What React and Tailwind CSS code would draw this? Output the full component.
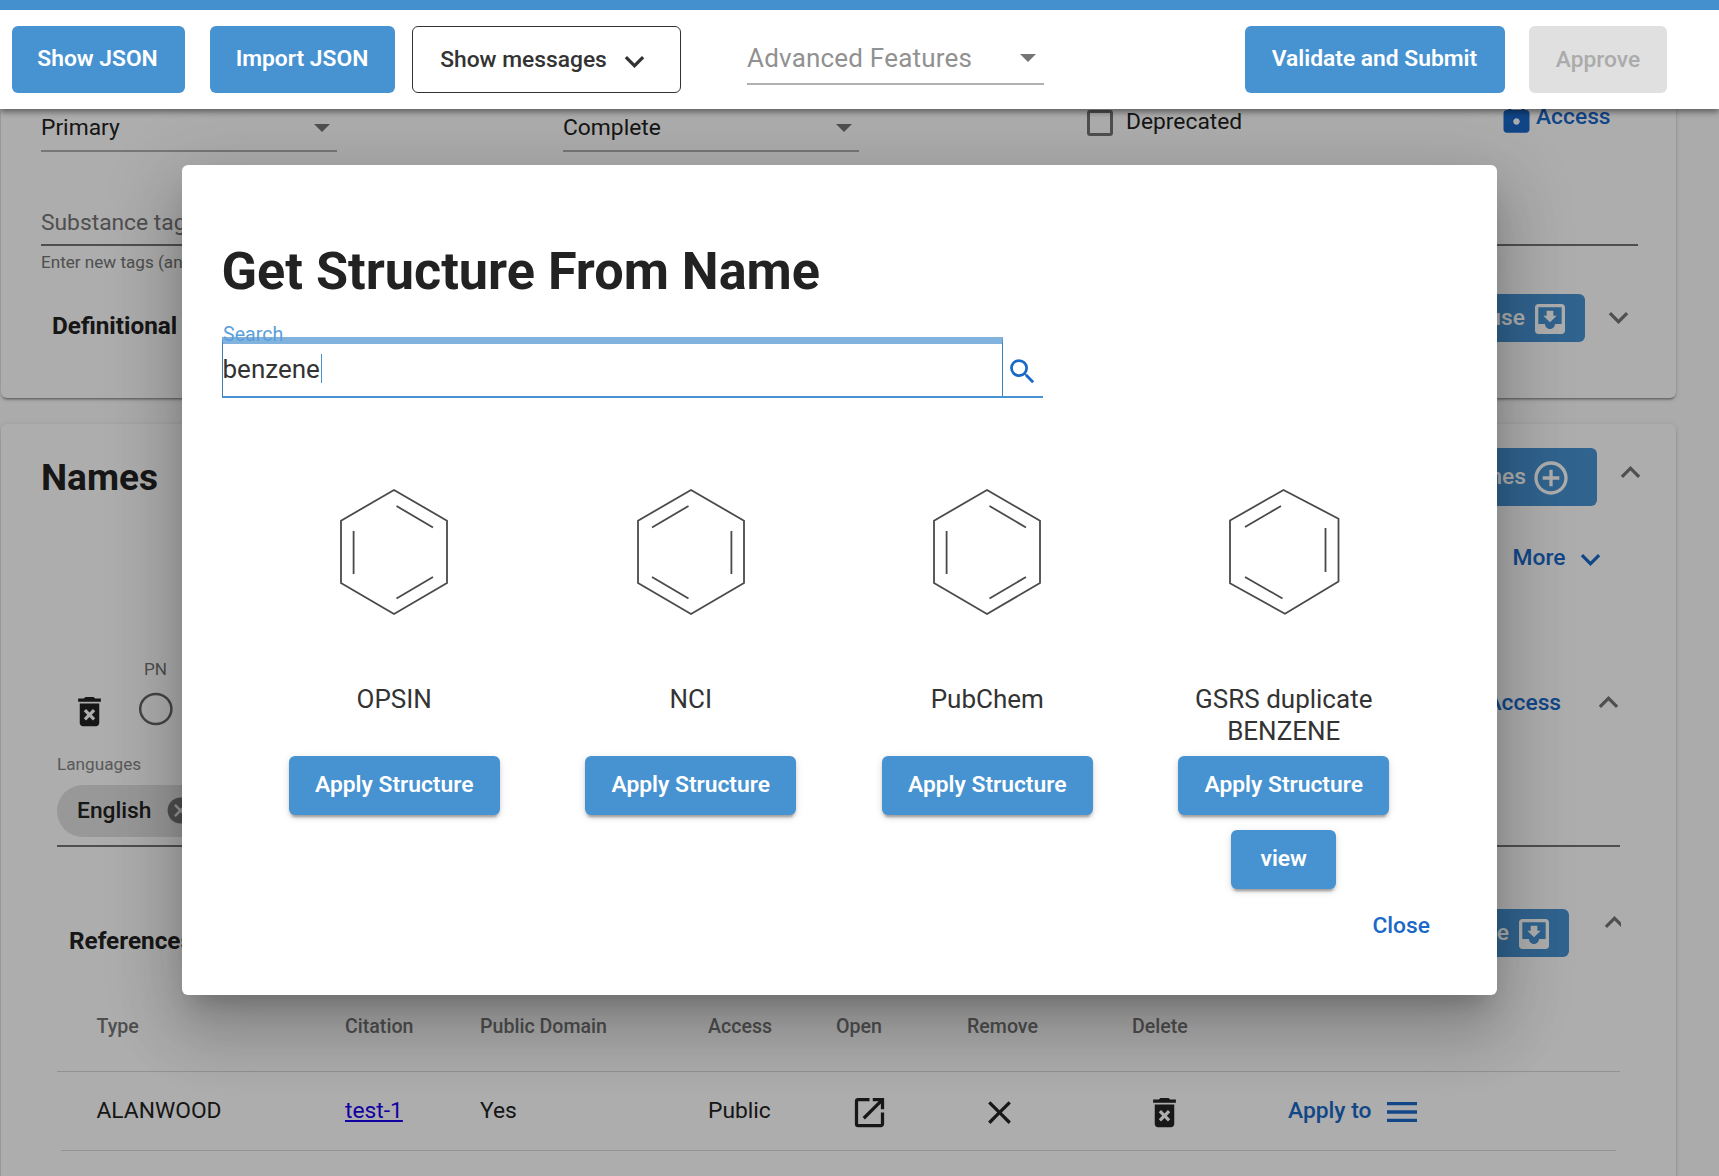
import React from "react";
import {
  MdAddCircleOutline,
  MdCancel,
  MdClose,
  MdDeleteForever,
  MdExpandLess,
  MdExpandMore,
  MdLock,
  MdMenu,
  MdMoveToInbox,
  MdOpenInNew,
  MdSearch,
} from "react-icons/md";

const BLUE_BUTTON =
  "flex items-center justify-center rounded-[6px] bg-[#4793d1] text-white";
const RAISED =
  "shadow-[0_5px_2px_-3px_rgba(0,0,0,0.2),0_3px_3px_0_rgba(0,0,0,0.14),0_2px_8px_0_rgba(0,0,0,0.12)]";

function DropArrow({ className }) {
  return (
    <svg viewBox="0 0 16 8" className={className}>
      <path d="M0 0h16l-8 8z" fill="currentColor" />
    </svg>
  );
}

function Toolbar() {
  return (
    <header className="relative z-20 flex h-[109px] items-start border-t-[10px] border-[#4490cf] bg-white pl-3 pt-4 shadow-[0_3px_6px_rgba(0,0,0,0.45)]">
      <button className={`${BLUE_BUTTON} h-[67px] w-[173px] pr-[2px] font-semibold`}>Show JSON</button>
      <button className={`${BLUE_BUTTON} ml-[25px] h-[67px] w-[185px] pr-px font-semibold`}>Import JSON</button>
      <button className="ml-[17px] flex h-[67px] w-[269px] items-center rounded-[6px] border-[1.5px] border-[#333] pl-[26px] font-medium text-[#333]">
        <span className="w-[169px] whitespace-nowrap pt-px">Show messages</span>
        <MdExpandMore className="ml-[7px] mt-[3px] size-[39px]" />
      </button>
      <div className="ml-[66px] flex h-[59px] w-[297px] items-center justify-between border-b-2 border-[#b0b0b0] pr-[8px] text-[26px] text-[#919191]">
        <span className="mt-[8px] tracking-[0.2px]">Advanced Features</span>
        <DropArrow className="mt-[7px] h-2 w-4 text-[#757575]" />
      </div>
      <button className={`${BLUE_BUTTON} ml-[201px] h-[67px] w-[260px] pr-px font-semibold`}>Validate and Submit</button>
      <button className="ml-6 h-[67px] w-[138px] rounded-[6px] bg-[#e0e0e0] pt-px font-medium text-[#ababab]">
        Approve
      </button>
    </header>
  );
}

function Select({ value, className }) {
  return (
    <div className={`flex h-[43px] w-[296px] items-start justify-between border-b-2 border-[#b0b0b0] pr-[7px] leading-[37px] text-[#222] ${className}`}>
      {value}
      <DropArrow className="mt-[15px] h-2 w-4 text-[#757575]" />
    </div>
  );
}

const CARD =
  "ml-[1px] w-[1675px] bg-white shadow-[0_3px_2px_-2px_rgba(0,0,0,0.25),0_2px_2px_rgba(0,0,0,0.15),0_1px_5px_rgba(0,0,0,0.15)]";

function DefinitionCard() {
  return (
    <section className={`${CARD} h-[289px] rounded-b-[6px] pl-[40px]`}>
      <div className="flex h-[43px] items-start">
        <Select value="Primary" />
        <Select value="Complete" className="ml-[226px]" />
        <span className="ml-[228px] mt-[1px] size-[26px] rounded-[3px] border-[3px] border-[#757575]" />
        <span className="ml-[13px] w-[120px] leading-[26px] text-[#222]">Deprecated</span>
        <span className="ml-[251px] -mt-3 flex items-start font-medium text-[#1a68c8]">
          <MdLock className="size-[39px]" />
          <span className="leading-[39px]">Access</span>
        </span>
      </div>
      <div className="flex h-[94px] w-[1597px] items-end border-b-2 border-[#757575] pb-[2px] leading-[38px] text-[#757575]">
        Substance tags
      </div>
      <div className="h-[40px] pt-[2px] text-[17.1px] leading-[29px] text-[#757575]">
        Enter new tags (and
      </div>
      <div className="flex items-start pl-[11px]">
        <h3 className="mt-[22px] w-[1301px] text-[24.3px] font-bold leading-[36px] text-[#222]">Definitional</h3>
        <button className={`${BLUE_BUTTON} mt-[8px] h-[48px] w-[232px] justify-end! pr-[15px] font-medium`}>
          <span>Reuse</span>
          <MdMoveToInbox className="ml-[5px] mt-[2px] size-[40px]" />
        </button>
        <MdExpandMore className="ml-[14px] mt-[12px] size-[39px] text-[#757575]" />
      </div>
    </section>
  );
}

function NamesCard() {
  return (
    <section className={`${CARD} mt-[26px] flex h-[800px] flex-col rounded-t-[6px] pl-[40px]`}>
      <div className="flex h-[105px] items-start">
        <h2 className="mt-[31px] w-[1300px] text-[37px] font-bold leading-[46px] text-[#222]">Names</h2>
        <button className={`${BLUE_BUTTON} mt-[24px] h-[58px] w-[256px] justify-end! pr-[26px] font-medium`}>
          <span>Names</span>
          <MdAddCircleOutline className="ml-[5px] mt-px size-[40px]" />
        </button>
        <MdExpandLess className="ml-[13.5px] mt-[28.5px] size-[39px] text-[#757575]" />
      </div>
      <div className="flex h-[59px] items-center justify-end pr-[66px] font-medium text-[#1a68c8]">
        More
        <MdExpandMore className="ml-[5.5px] mt-[2px] size-[39px]" />
      </div>
      <div className="flex h-[164px] items-start">
        <MdDeleteForever className="ml-[29px] mt-[103.5px] size-[39px] text-[#222]" />
        <div className="ml-[21.5px] mt-[69px] flex w-[50px] flex-col items-center text-[17.1px] leading-[24px] text-[#757575]">
          PN
          <svg viewBox="0 0 34 34" className="mt-[11px] size-[34px]">
            <ellipse cx="16.8" cy="17" rx="15.6" ry="15" fill="none" stroke="#666" strokeWidth="2.5" />
          </svg>
        </div>
        <span className="ml-[1306px] mt-[97px] font-medium leading-[36px] text-[#1a68c8]">Access</span>
        <MdExpandLess className="ml-[28px] mt-[95px] size-[39px] text-[#757575]" />
      </div>
      <div className="ml-[16px] flex h-[95px] w-[1563px] flex-col border-b-2 border-[#757575]">
        <span className="text-[17.2px] leading-[25px] text-[#858585]">Languages</span>
        <div className="mt-[8px] flex h-[52px] w-[160px] items-center rounded-full bg-[#e0e0e0] pl-[20px] font-medium text-[#222]">
          <span className="w-[74px]">English</span>
          <MdCancel className="ml-[13.5px] -mt-px size-[31px] text-[#757575]" />
        </div>
      </div>
      <div className="ml-[28px] flex h-[123px] items-start">
        <h3 className="mt-[76px] w-[1280px] text-[24.3px] font-bold leading-[36px] text-[#222]">References</h3>
        <button className={`${BLUE_BUTTON} mt-[62px] h-[48px] w-[220px] justify-end! pr-[15px] font-medium`}>
          <span>Reuse</span>
          <MdMoveToInbox className="ml-[5px] mt-[2px] size-[40px]" />
        </button>
        <div className="ml-[25.5px] mt-[56px] h-[39px] w-[26px] overflow-hidden">
          <MdExpandLess className="size-[39px] text-[#757575]" />
        </div>
      </div>
      <ReferenceTable />
    </section>
  );
}

const COLUMNS =
  "grid grid-cols-[248.5px_135px_228px_128px_131px_165px_156px_1fr] items-center pl-[39.5px]";

function ReferenceTable() {
  return (
    <div className="ml-[16px] w-[1563px]">
      <div className={`${COLUMNS} h-[102px] border-b-[1.5px] border-[#d8d8d8] pt-[12px] text-[19.6px] font-medium text-[#757575]`}>
        <span>Type</span>
        <span>Citation</span>
        <span>Public Domain</span>
        <span>Access</span>
        <span>Open</span>
        <span>Remove</span>
        <span>Delete</span>
      </div>
      <div className={`${COLUMNS} mx-[4px] h-[79px] border-b-[1.5px] border-[#d8d8d8] pl-[35.5px]! pt-px text-[#222]`}>
        <span>ALANWOOD</span>
        <span className="text-[#1a00ee] underline">test-1</span>
        <span>Yes</span>
        <span>Public</span>
        <MdOpenInNew className="ml-[14px] mt-[2px] size-[39px]" />
        <MdClose className="ml-[13px] mt-[2px] size-[39px]" />
        <MdDeleteForever className="ml-[13px] mt-[2px] size-[39px]" />
        <span className="flex items-center font-medium text-[#1a68c8]">
          Apply to
          <MdMenu className="ml-[11px] size-[40px]" />
        </span>
      </div>
    </div>
  );
}

const RING_LEFT = {
  outline: "60,10 113,40.7 113,103 60,134 7,103 7,40.7",
  bonds: "M19.6 51v43M62.5 26l36.5 21.5M62.5 118.5l36.5-21.5",
};
const RING_RIGHT = {
  outline: "60,10 113,40.7 113,103 60,134 7,103 7,40.7",
  bonds: "M100.4 51v43M57.5 26l-36.5 21.5M57.5 118.5l-36.5-21.5",
};
const RING_SKEWED = {
  outline: "59.5,10 114.5,38.7 114.5,101.5 61,133.7 6,103.3 6,40.5",
  bonds: "M101.5 48v44M57 26l-36 21M58.5 118.5L21 97",
};

const RESULTS = [
  { label: ["OPSIN"], ring: RING_LEFT },
  { label: ["NCI"], ring: RING_RIGHT },
  { label: ["PubChem"], ring: RING_LEFT },
  { label: ["GSRS duplicate", "BENZENE"], ring: RING_SKEWED, view: true },
];

function Result({ label, ring, view }) {
  return (
    <div className="flex flex-col items-center">
      <svg viewBox="0 0 120 144" className="h-[144px] w-[120px]" fill="none" stroke="#4a4a4a" strokeWidth="1.8">
        <polygon points={ring.outline} />
        <path d={ring.bonds} />
      </svg>
      <div className="mt-[59px] h-[64px] text-center text-[26px] leading-[32px] text-[#333]">
        {label.map((line) => (
          <div key={line}>{line}</div>
        ))}
      </div>
      <button className={`${BLUE_BUTTON} ${RAISED} mt-[9px] h-[59px] w-[211px] font-semibold`}>Apply Structure</button>
      {view && <button className={`${BLUE_BUTTON} ${RAISED} mt-[15px] h-[59px] w-[105px] font-semibold`}>view</button>}
    </div>
  );
}

function StructureDialog() {
  return (
    <div
      role="dialog"
      className="absolute left-[182px] top-[164.5px] z-10 flex h-[830.5px] w-[1315px] flex-col rounded-[6px] bg-white px-[39.5px] pt-[77px] shadow-[0_18px_24px_-11px_rgba(0,0,0,0.2),0_39px_62px_5px_rgba(0,0,0,0.14),0_15px_75px_13px_rgba(0,0,0,0.12)]"
    >
      <h1 className="text-[52.2px] font-bold leading-[60px] text-[#222]">Get Structure From Name</h1>
      <div className="relative mt-[35px] flex h-[61px] w-[821px] border-b-[2.5px] border-[#4793d1]">
        <div className="flex w-[781px] items-center border-x-[1.5px] border-t-[7px] border-x-[#3d7fb5] border-t-[#82b3df] text-[26px] text-[#333]">
          <span className="-mt-px">benzene</span>
          <span className="ml-[1px] mt-[-3px] h-[29px] w-[1.5px] bg-[#4793d1]" />
        </div>
        <MdSearch className="ml-[3px] mt-[18px] size-[33px] text-[#1a68c8]" />
        <label className="absolute left-[1.5px] top-[-14px] text-[19.6px] leading-[24px] text-[#5b9fda]">Search</label>
      </div>
      <div className="ml-[24.5px] mt-[82px] grid w-[1186px] grid-cols-4">
        {RESULTS.map((result) => (
          <Result key={result.label[0]} {...result} />
        ))}
      </div>
      <div className="mt-[19px] flex justify-end pr-[27.5px] font-medium leading-[36px] text-[#1a68c8]">Close</div>
    </div>
  );
}

export default function App() {
  return (
    <div className="relative h-[1176px] w-[1719px] overflow-hidden whitespace-nowrap bg-[#fcfcfc] font-[Roboto,sans-serif] text-[22.8px]">
      <Toolbar />
      <DefinitionCard />
      <NamesCard />
      <div className="absolute inset-0 bg-black/32" />
      <StructureDialog />
    </div>
  );
}
